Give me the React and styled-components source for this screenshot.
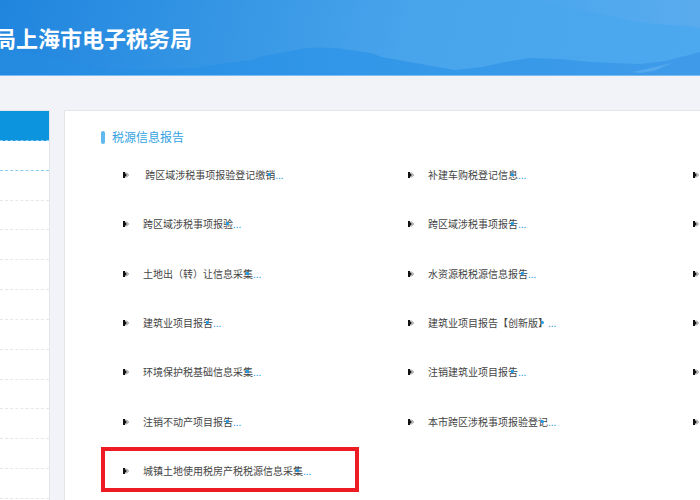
import React from "react";
import styled, { createGlobalStyle } from "styled-components";

const GlobalStyle = createGlobalStyle`
  * {
    box-sizing: border-box;
  }
  body {
    margin: 0;
    overflow: hidden;
    background: #f2f3f8;
    font-family: "Noto Sans CJK SC", sans-serif;
  }
`;

// read row by row, three columns; the third column only shows its arrows
const reports = [
  "\u00a0跨区域涉税事项报验登记缴销",
  "补建车购税登记信息",
  "",
  "跨区域涉税事项报验",
  "跨区域涉税事项报告",
  "",
  "土地出（转）让信息采集",
  "水资源税税源信息报告",
  "",
  "建筑业项目报告",
  "建筑业项目报告【创新版】",
  "",
  "环境保护税基础信息采集",
  "注销建筑业项目报告",
  "",
  "注销不动产项目报告",
  "本市跨区涉税事项报验登记",
  "",
  "城镇土地使用税房产税税源信息采集",
];

const menuRows = Array.from({ length: 13 });

const Arrow = () => (
  <ArrowIcon viewBox="0 0 6 6" aria-hidden="true">
    <path d="M0 0h2v6H0z" fill="#111" />
    <path d="M1 0L4 3L1 6z" fill="#111" />
    <path d="M3 0.5L5.5 3L3 5.5" fill="none" stroke="#555" strokeWidth="0.8" />
  </ArrowIcon>
);

export default function App() {
  return (
    <Page>
      <GlobalStyle />
      <Header>
        <Mountains viewBox="0 0 700 76" preserveAspectRatio="none">
          <defs>
            <linearGradient
              id="sky"
              gradientUnits="userSpaceOnUse"
              x1="0"
              y1="0"
              x2="680"
              y2="160"
            >
              <stop offset="0" stopColor="#2085de" />
              <stop offset="0.28" stopColor="#3394e4" />
              <stop offset="0.58" stopColor="#48a4eb" />
              <stop offset="1" stopColor="#4ca9f0" />
            </linearGradient>
            <linearGradient id="hill" x1="0" y1="0" x2="1" y2="0">
              <stop offset="0" stopColor="#238ae0" />
              <stop offset="0.5" stopColor="#3297e8" />
              <stop offset="1" stopColor="#3f9bea" />
            </linearGradient>
            <linearGradient id="cloud" x1="0" y1="0" x2="1" y2="0">
              <stop offset="0" stopColor="#5cabec" stopOpacity="0" />
              <stop offset="1" stopColor="#5cabec" stopOpacity="0.8" />
            </linearGradient>
          </defs>
          <rect width="700" height="76" fill="url(#sky)" />
          <path
            d="M520 0C550 2 575 10 615 17C650 26 680 24 700 28V0z"
            fill="url(#cloud)"
          />
          <path
            d="M0 47C30 52 70 62 110 71C135 70 165 69 195 68L225 63L252 60L262 56L290 51C305 47 320 47 335 48L350 50L371 53L382 57L410 62L432 66L455 70L482 67L505 62L530 58L560 59L590 62L615 63L640 64L665 61L685 56L700 52V76H0z"
            fill="url(#hill)"
          />
          <path
            d="M632 72L646 69L672 63L654 71L640 73z"
            fill="#7fc0f6"
            opacity="0.35"
          />
          <rect y="75" width="700" height="1" fill="#7fbdf1" />
        </Mountains>
        <SiteName>局上海市电子税务局</SiteName>
      </Header>
      <Body>
        <Sidebar>
          {menuRows.map((_, inx) => (
            <MenuRow key={inx} $active={inx === 0} $open={inx === 1} />
          ))}
        </Sidebar>
        <Panel>
          <PanelTitle>税源信息报告</PanelTitle>
          <ReportList>
            {reports.map((name, inx) => (
              <ReportItem key={inx} $marked={inx === reports.length - 1}>
                <Arrow />
                {name && (
                  <ReportLink href="#">
                    {name}
                    <More>...</More>
                  </ReportLink>
                )}
              </ReportItem>
            ))}
          </ReportList>
        </Panel>
      </Body>
    </Page>
  );
}

const Page = styled.div`
  display: flex;
  flex-direction: column;
  min-height: 100vh;
  overflow: hidden;
`;

const Header = styled.header`
  position: relative;
  height: 76px;
`;

const Mountains = styled.svg`
  position: absolute;
  inset: 0;
  width: 100%;
  height: 100%;
`;

const SiteName = styled.h1`
  position: relative;
  display: flex;
  justify-content: flex-end;
  width: 192px;
  margin: 0;
  padding-top: 22px;
  color: #fff;
  font-size: 22px;
  font-weight: 700;
  line-height: 30px;
  white-space: nowrap;
`;

const Body = styled.div`
  display: flex;
  flex: 1;
  gap: 14px;
  padding-top: 34px;
`;

const Sidebar = styled.ul`
  display: flex;
  flex: 0 0 50px;
  flex-direction: column;
  margin: 0;
  padding: 0 0 1px;
  list-style: none;
  background: #fff;
  border: solid #e3e5e8;
  border-width: 1px 1px 0 0;
`;

const MenuRow = styled.li`
  flex: 1;
  background: ${(props) => (props.$active ? "#0d94df" : "#fff")};
  border-bottom: 1px dashed
    ${(props) => (props.$active || props.$open ? "#8accf0" : "#e6e7e8")};
`;

const Panel = styled.main`
  display: flex;
  flex: 1;
  flex-direction: column;
  min-width: 0;
  padding: 16px 0 4px 36px;
  background: #fff;
  border: solid #e3e5e8;
  border-width: 1px 0 0 1px;
`;

const PanelTitle = styled.h2`
  display: flex;
  align-items: center;
  gap: 7px;
  margin: 0 0 3px;
  color: #35a3e2;
  font-size: 12px;
  font-weight: 400;
  line-height: 20px;

  &::before {
    content: "";
    width: 4px;
    height: 13px;
    border-radius: 2px;
    background: #60b8ee;
  }
`;

const ReportList = styled.ul`
  display: grid;
  flex: 1;
  grid-template-columns: repeat(3, minmax(285px, 1fr));
  grid-auto-rows: 1fr;
  margin: 0;
  padding: 0;
  list-style: none;
`;

const ReportItem = styled.li`
  display: flex;
  align-items: center;
  gap: 14px;
  margin: ${(props) => (props.$marked ? "0 27px 4px 0" : "2px 27px 2px 0")};
  padding: ${(props) => (props.$marked ? "4px 0 0 18px" : "0 0 0 22px")};
  border: ${(props) => (props.$marked ? "4px solid #ed1c24" : "none")};
`;

const ArrowIcon = styled.svg`
  flex: none;
  width: 6px;
  height: 6px;
`;

const ReportLink = styled.a`
  color: #444;
  font-size: 10px;
  line-height: 16px;
  text-decoration: none;
  white-space: nowrap;
`;

// the dots carry a small blue marker that sits over the last character
const More = styled.span`
  position: relative;
  color: #1f9ce4;

  &::before {
    content: "";
    position: absolute;
    top: 6px;
    left: -7px;
    width: 3px;
    height: 3px;
    border-radius: 0 2px 2px 0;
    background: #1f9ce4;
  }
`;
